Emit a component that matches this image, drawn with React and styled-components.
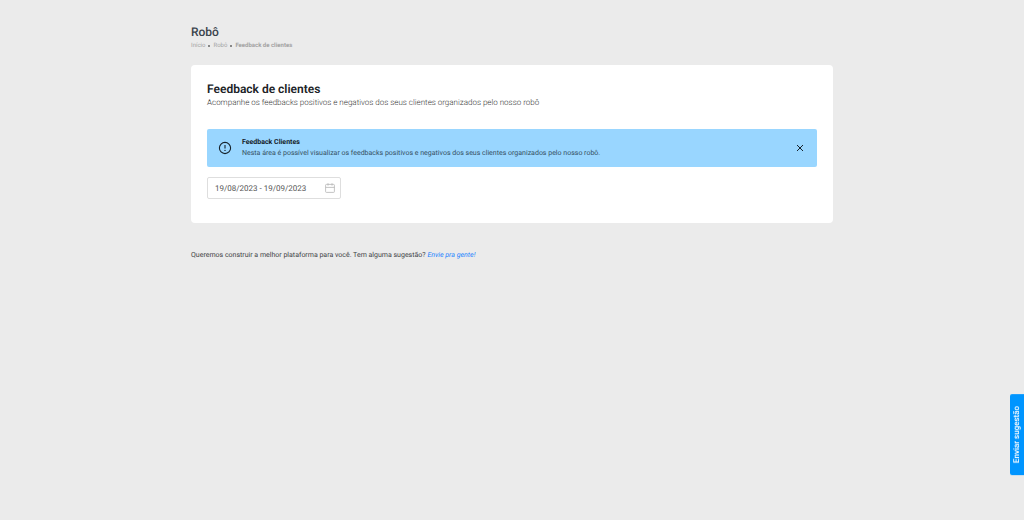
import React, { useState } from "react"
import styled, { createGlobalStyle, ThemeProvider } from "styled-components"

const theme = {
  background: "#ebebeb",
  surface: "#ffffff",
  title: "#3a444d",
  heading: "#202327",
  text: "#3f4347",
  muted: "#a3a3a3",
  info: "#99d6ff",
  link: "#1a82ff",
  primary: "#0095ff",
  border: "#dedede",
}

const AlertIcon = () => (
  <svg width="14" height="14" viewBox="0 0 14 14" fill="none" stroke="currentColor" aria-hidden="true">
    <circle cx="7" cy="7" r="5.6" strokeWidth="1.1" />
    <path d="M7 4v3.6" strokeWidth="1.1" />
    <circle cx="7" cy="9.4" r="0.7" fill="currentColor" stroke="none" />
  </svg>
)

const CloseIcon = () => (
  <svg width="8" height="8" viewBox="0 0 8 8" fill="none" stroke="currentColor" aria-hidden="true">
    <path d="M1 1l6 6M7 1L1 7" strokeWidth="1" />
  </svg>
)

const CalendarIcon = () => (
  <svg width="10" height="10" viewBox="0 0 10 10" fill="none" stroke="currentColor" aria-hidden="true">
    <rect x="0.6" y="1.4" width="8.8" height="8" rx="0.8" strokeWidth="0.8" />
    <path d="M0.6 4.4h8.8M3 0.2v2.4M7 0.2v2.4" strokeWidth="0.8" />
  </svg>
)

const Alert = ({ title, content, onClose }) => (
  <AlertWrap role="status">
    <AlertIcon />
    <div className="body">
      <strong>{title}</strong>
      <p>{content}</p>
    </div>
    <CloseButton type="button" aria-label="Fechar" onClick={onClose}>
      <CloseIcon />
    </CloseButton>
  </AlertWrap>
)

const App = () => {
  const [showAlert, setShowAlert] = useState(true)
  const [period, setPeriod] = useState("19/08/2023 - 19/09/2023")

  return (
    <ThemeProvider theme={theme}>
      <GlobalStyle />
      <Page>
        <header>
          <PageTitle>Robô</PageTitle>
          <Breadcrumb aria-label="Navegação">
            <a href="#inicio">Início</a>
            <Dot />
            <a href="#robo">Robô</a>
            <Dot />
            <strong>Feedback de clientes</strong>
          </Breadcrumb>
        </header>

        <Card>
          <CardTitle>Feedback de clientes</CardTitle>
          <CardText>
            Acompanhe os feedbacks positivos e negativos dos seus clientes organizados pelo nosso robô
          </CardText>
          {showAlert && (
            <Alert
              title="Feedback Clientes"
              content="Nesta área é possível visualizar os feedbacks positivos e negativos dos seus clientes organizados pelo nosso robô."
              onClose={() => setShowAlert(false)}
            />
          )}
          <DateField>
            <input
              type="text"
              aria-label="Período"
              value={period}
              onChange={(e) => setPeriod(e.target.value)}
            />
            <CalendarIcon />
          </DateField>
        </Card>

        <Footer>
          Queremos construir a melhor plataforma para você. Tem alguma sugestão?{" "}
          <a href="#sugestao">Envie pra gente!</a>
        </Footer>
      </Page>
      <SuggestionButton type="button">Enviar sugestão</SuggestionButton>
    </ThemeProvider>
  )
}

export default App

const GlobalStyle = createGlobalStyle`
  * {
    box-sizing: border-box;
  }

  body {
    margin: 0;
    background: ${({ theme }) => theme.background};
    color: ${({ theme }) => theme.text};
    font-family: Roboto, "Liberation Sans", sans-serif;
    font-size: 7px;
    line-height: 11px;
    text-rendering: geometricPrecision;
  }

  h1, h2, p {
    margin: 0;
  }

  a {
    text-decoration: none;
  }

  button, input {
    font-family: inherit;
    text-rendering: inherit;
  }
`

const Page = styled.main`
  max-width: 674px;
  margin: 0 auto;
  padding: 24px 16px;
`

const PageTitle = styled.h1`
  font-size: 12px;
  line-height: 16px;
  font-weight: 500;
  color: ${({ theme }) => theme.title};
`

const Breadcrumb = styled.nav`
  display: flex;
  align-items: center;
  gap: 3px;
  font-size: 6px;
  color: ${({ theme }) => theme.muted};

  a {
    color: inherit;
  }

  strong {
    font-weight: 700;
  }
`

const Dot = styled.span`
  width: 2px;
  height: 2px;
  border-radius: 50%;
  background: #666;
`

const Card = styled.section`
  margin-top: 14px;
  padding: 16px 16px 24px;
  border-radius: 4px;
  background: ${({ theme }) => theme.surface};
`

const CardTitle = styled.h2`
  font-size: 12px;
  line-height: 16px;
  font-weight: 600;
  color: ${({ theme }) => theme.heading};
`

const CardText = styled.p`
  font-size: 8px;
  font-weight: 300;
  color: #3a3a3a;
`

const AlertWrap = styled.div`
  display: flex;
  align-items: center;
  gap: 10px;
  margin-top: 21px;
  padding: 8px 12px 8px 11px;
  border-radius: 2px;
  background: ${({ theme }) => theme.info};
  color: #16222b;

  .body {
    flex: 1;
  }

  strong {
    display: block;
    font-weight: 700;
  }

  p {
    color: #35505f;
  }
`

const CloseButton = styled.button`
  display: flex;
  padding: 1px;
  border: 0;
  background: none;
  color: #16222b;
  cursor: pointer;
`

const DateField = styled.label`
  display: flex;
  align-items: center;
  width: 134px;
  height: 22px;
  margin-top: 10px;
  padding: 0 5px 0 7px;
  border: 1px solid ${({ theme }) => theme.border};
  border-radius: 2px;
  color: #b5b5b5;

  input {
    flex: 1;
    min-width: 0;
    padding: 0;
    border: 0;
    outline: 0;
    background: none;
    font-size: 8px;
    color: #555;
  }
`

const Footer = styled.footer`
  margin-top: 27px;

  a {
    font-style: italic;
    color: ${({ theme }) => theme.link};
  }
`

const SuggestionButton = styled.button`
  position: fixed;
  right: 0;
  bottom: 45px;
  padding: 12px 3px;
  border: 0;
  border-radius: 0 2px 2px 0;
  background: ${({ theme }) => theme.primary};
  color: #fff;
  font-size: 8px;
  line-height: 8px;
  font-weight: 500;
  writing-mode: vertical-rl;
  rotate: 180deg;
  cursor: pointer;
`
